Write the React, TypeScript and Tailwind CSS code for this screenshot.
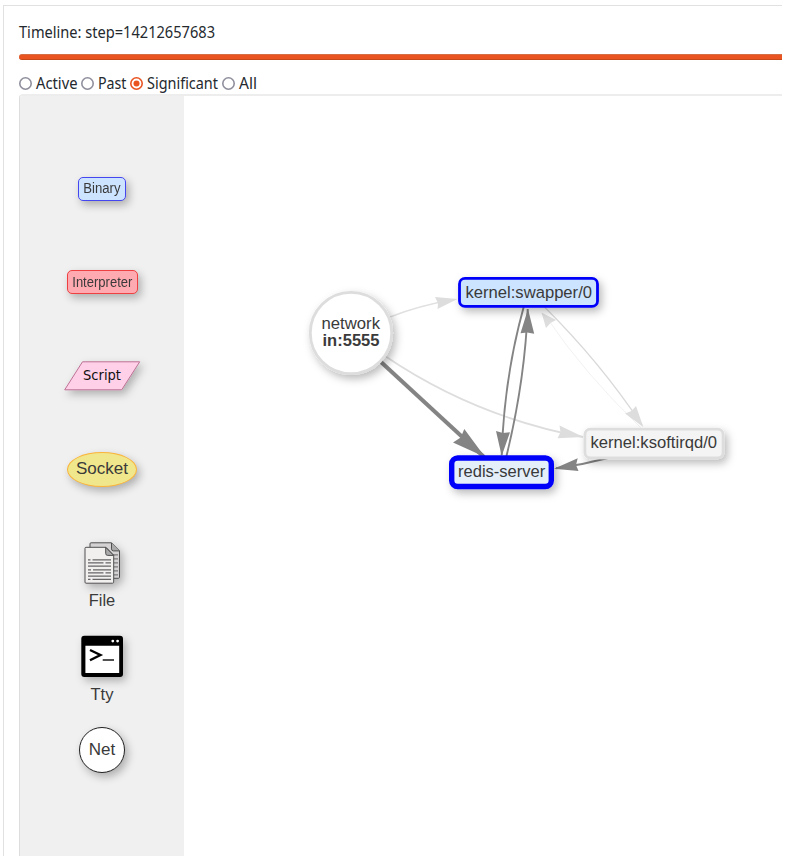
import type { ReactNode } from "react";

const sans = "font-['Liberation_Sans',Arial,sans-serif] text-[#3a3a3a]";
const ui = "font-['Noto_Sans',sans-serif] text-[#24292e]";
const soft = "shadow-[3px_4px_9px_rgba(0,0,0,0.28)]";

function Radio({ label, checked, width, length }: { label: string; checked?: boolean; width: string; length: number }) {
  return (
    <label className={`flex items-center ${width}`}>
      <svg className="mr-[3.5px] h-[13px] w-[13px] shrink-0" viewBox="0 0 13 13">
        <circle cx="6.5" cy="6.5" r="5.7" fill="#fff" stroke={checked ? "#e95420" : "#8f8f9d"} strokeWidth="1.6" />
        {checked && <circle cx="6.5" cy="6.5" r="3" fill="#e95420" />}
      </svg>
      <svg className="h-[22px] overflow-visible" width="1" height="22">
        <text x="0" y="15.5" className="font-['Noto_Sans',sans-serif] text-[16px]" fill="#24292e"
          textLength={length} lengthAdjust="spacingAndGlyphs">{label}</text>
      </svg>
    </label>
  );
}

function Row({ children }: { children: ReactNode }) {
  return <div className="flex h-[93.55px] shrink-0 items-center justify-center">{children}</div>;
}

function Shadow({ id }: { id: string }) {
  return (
    <filter id={id} x="-30%" y="-60%" width="170%" height="240%">
      <feDropShadow dx="3" dy="4" stdDeviation="4" floodColor="#000" floodOpacity="0.27" />
    </filter>
  );
}

function Legend() {
  return (
    <aside className={`w-[164px] shrink-0 bg-[#f0f0f0] pt-[46px] ${sans}`}>
      <Row>
        <div className={`flex h-[24px] w-[48px] items-center justify-center rounded-[5px] border border-[#4646f0] bg-[#cce4ff] text-[14px] ${soft}`}>
          <span className="-mt-px scale-x-[0.94]">Binary</span>
        </div>
      </Row>
      <Row>
        <div className={`flex h-[24px] w-[71px] items-center justify-center rounded-[5px] border border-[#ee4040] bg-[#ffaab0] text-[14px] ${soft}`}>
          <span className="scale-x-[0.93]">Interpreter</span>
        </div>
      </Row>
      <Row>
        <svg className="h-[50px] w-[96px] overflow-visible" viewBox="54 351 96 50">
          <defs><Shadow id="s1" /></defs>
          <path d="M82.5 361.8H139.7L121.7 389.8H64.7Z" fill="#ffd0e8" stroke="#bc7195" filter="url(#s1)" />
          <text x="83" y="380" textLength="38" lengthAdjust="spacingAndGlyphs" fill="#111" className="font-['DejaVu_Sans',sans-serif] text-[13.6px]">Script</text>
        </svg>
      </Row>
      <Row>
        <div className={`flex h-[35px] w-[70px] items-center justify-center rounded-[50%] border border-[#fbb43a] bg-[#f0e68c] pb-px text-[17px] ${soft}`}>
          <span>Socket</span>
        </div>
      </Row>
      <Row>
        <svg className="h-[94px] w-[80px] overflow-visible" viewBox="62 516.1 80 94">
          <defs><Shadow id="s2" /></defs>
          <g filter="url(#s2)" stroke="#505050" strokeWidth="1" strokeLinejoin="round">
            <path d="M91 542.9h20.5l8 8v26.5q0 1-1 1H91q-1 0-1-1v-33.5q0-1 1-1Z" fill="#d4d2d2" />
            <path d="M111.5 543v6q0 2 2 2h6" fill="#aaa" />
            <path d="M113 555h5M113 559h5M113 563h5M113 567h5M113 571h5M113 575h5" stroke="#666" strokeWidth="1" />
            <path d="M86 547.4h20l7.7 8v26.9q0 1-1 1H86q-1 0-1-1v-33.9q0-1 1-1Z" fill="#f2efef" />
            <path d="M105.7 547.5v6q0 2 2 2h6Z" fill="#aaa" />
            <path d="M88 560h2.5M92.5 560h18.5M88 563h15.5M105.5 563h5.5M88 566.3h23M88 569.9h3M93 569.9h18M88 573h15.5M105.5 573h5.5M88 576.2h23M88 579.5h2.5M92.5 579.5h18.5" stroke="#666" strokeWidth="1.2" />
          </g>
          <text x="102" y="606" textAnchor="middle" textLength="26.5" lengthAdjust="spacingAndGlyphs" fill="#3a3a3a" className="text-[17px]">File</text>
        </svg>
      </Row>
      <Row>
        <svg className="h-[94px] w-[80px] overflow-visible" viewBox="62 610.2 80 94">
          <defs><Shadow id="s3" /></defs>
          <rect x="81.3" y="636" width="41.7" height="41.2" rx="3" fill="#000" filter="url(#s3)" />
          <path d="M85.4 646H119.2V673.3H85.4Z" fill="#fff" />
          <circle cx="112.8" cy="641.3" r="1.4" fill="#fff" />
          <circle cx="117.6" cy="641.3" r="1.4" fill="#fff" />
          <path d="M90 650.2L100.4 655.2L90 660.4" fill="none" stroke="#000" strokeWidth="2.4" />
          <path d="M102.7 660.2H114" stroke="#333" strokeWidth="1.7" />
          <text x="102" y="700" textAnchor="middle" textLength="23" lengthAdjust="spacingAndGlyphs" fill="#3a3a3a" className="text-[17px]">Tty</text>
        </svg>
      </Row>
      <Row>
        <div className={`flex h-[46px] w-[46px] items-center justify-center rounded-full border border-[#222] bg-white pb-px text-[17px] ${soft}`}>
          <span>Net</span>
        </div>
      </Row>
    </aside>
  );
}

function Graph() {
  return (
    <svg className="h-[760px] w-[598px] shrink-0" viewBox="184 96 598 760">
      <defs><Shadow id="node-shadow" /></defs>
      <g fill="none">
        <path d="M390 317Q418 306 452 299.8" stroke="#e0e0e0" strokeWidth="1.4" />
        <path d="M385 356Q475 417 583 437" stroke="#ddd" strokeWidth="1.8" />
        <path d="M381 362L484 457" stroke="#848484" strokeWidth="4" />
        <path d="M523.7 307Q504 378 501.7 455" stroke="#848484" strokeWidth="1.9" />
        <path d="M506.5 456Q525 380 527.7 309" stroke="#848484" strokeWidth="1.9" />
        <path d="M544.5 307Q600 362 642 425" stroke="#d9d9d9" strokeWidth="1.2" />
        <path d="M641 428Q584 373 547 318" stroke="#eeeeee" strokeWidth="0.8" />
        <path d="M608 458Q582 465 556 468.3" stroke="#848484" strokeWidth="2" />
      </g>
      <g fill="#ddd">
        <path d="M457.5 299L435 297L438 303.2L437.5 309Z" />
        <path d="M583.5 437L559.5 425.5L560.5 432.3L557.5 438.3Z" />
        <path d="M643.3 427L636 406L631.5 411L625 413.5Z" />
        <path d="M541.5 312.5L556 320L550.5 323L546 328Z" />
      </g>
      <g fill="#848484">
        <path d="M485 457L464.3 429L460.7 437.5L453 442.5Z" />
        <path d="M501.7 456L496 431L502.9 433L510 432.2Z" />
        <path d="M528 309L520.5 333.3L527.2 332.5L534.2 333.7Z" />
        <path d="M554 468.7L577.7 458.2L576 465L578.5 471Z" />
      </g>
      <circle cx="351" cy="333" r="40.7" fill="#fff" stroke="#ddd" strokeWidth="2.8" filter="url(#node-shadow)" />
      <rect x="459.5" y="278.4" width="138" height="28" rx="5.5" fill="#cce4ff" stroke="#0000fa" strokeWidth="2.8" filter="url(#node-shadow)" />
      <rect x="584.9" y="429.2" width="138.2" height="28.7" rx="5.5" fill="#f4f4f4" stroke="#ddd" strokeWidth="2.8" filter="url(#node-shadow)" />
      <rect x="451.7" y="458" width="99.6" height="28.5" rx="6" fill="#e4effa" stroke="#0000fa" strokeWidth="5.4" filter="url(#node-shadow)" />
      <g fill="#3a3a3a" className="font-['Liberation_Sans',Arial,sans-serif] text-[16.8px]">
        <text x="321.5" y="329.3" textLength="58.5" lengthAdjust="spacingAndGlyphs">network</text>
        <text x="322.5" y="346.4" textLength="57" lengthAdjust="spacingAndGlyphs" fontWeight="700">in:5555</text>
        <text x="465.5" y="297.7" textLength="126.5" lengthAdjust="spacingAndGlyphs">kernel:swapper/0</text>
        <text x="590.5" y="448.2" textLength="126.5" lengthAdjust="spacingAndGlyphs">kernel:ksoftirqd/0</text>
        <text x="458" y="477" textLength="87.3" lengthAdjust="spacingAndGlyphs">redis-server</text>
      </g>
    </svg>
  );
}

export default function App() {
  return (
    <div className="h-[858px] w-[789px] overflow-hidden bg-white pl-[3px] pt-[5px]">
      <main className={`flex h-[851px] w-[779px] flex-col border-l border-t border-[#e1e1e1] pl-[15px] ${ui}`}>
        <div className="flex h-[48px] items-center pt-[3px]">
          <svg className="h-[24px] w-[197px] overflow-visible">
            <text x="0" y="18" textLength="196" lengthAdjust="spacingAndGlyphs" fill="#24292e" className="font-['Noto_Sans',sans-serif] text-[16px]">Timeline: step=14212657683</text>
          </svg>
        </div>
        <div className="h-[6px] shrink-0 rounded-l-[3px] border-y border-b-[#c6491a] border-t-[#d46f45] bg-[#e95420]" />
        <div className="flex h-[34px] shrink-0 items-center pt-[13px]">
          <Radio label="Active" width="w-[62px]" length={41.5} />
          <Radio label="Past" width="w-[49px]" length={28.5} />
          <Radio label="Significant" checked width="w-[92px]" length={71} />
          <Radio label="All" width="w-[40px]" length={18} />
        </div>
        <section className="flex h-[762px] w-[763px] shrink-0 overflow-hidden rounded-tl-[4px] border-l border-t-2 border-l-[#ddd] border-t-[#ededed]">
          <Legend />
          <Graph />
        </section>
      </main>
    </div>
  );
}
